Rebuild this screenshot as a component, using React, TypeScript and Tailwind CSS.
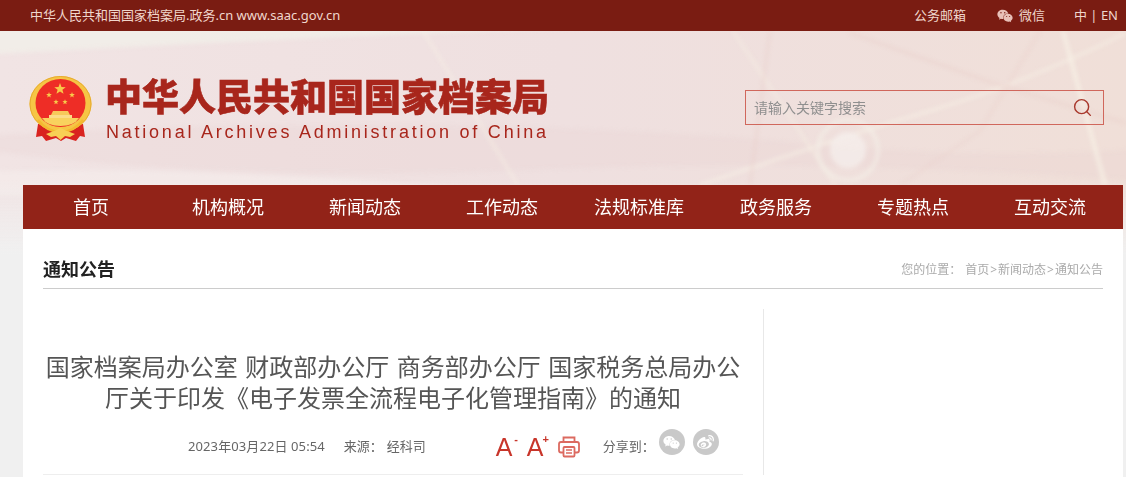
import { Search } from 'lucide-react'
import { FaWeibo, FaWeixin } from 'react-icons/fa'

const navItems = ['首页', '机构概况', '新闻动态', '工作动态', '法规标准库', '政务服务', '专题热点', '互动交流']

function star(cx: number, cy: number, r: number) {
    const pts: string[] = []
    for (let i = 0; i < 10; i++) {
        const rad = i % 2 === 0 ? r : r * 0.42
        const a = (Math.PI / 5) * i - Math.PI / 2
        pts.push(`${(cx + rad * Math.cos(a)).toFixed(2)},${(cy + rad * Math.sin(a)).toFixed(2)}`)
    }
    return pts.join(' ')
}

function Emblem() {
    return (
        <svg width="64" height="66" viewBox="0 0 64 66" className="shrink-0">
            <path d="M9 48 L7 61 L13 60 L17 65 L27 62 L32 65 L37 62 L47 65 L51 60 L56 61 L54 48 Z" fill="#d9231f" />
            <ellipse cx="31.5" cy="28" rx="31" ry="28" fill="#f6c545" />
            <ellipse cx="31.5" cy="28" rx="30.5" ry="27.5" fill="none" stroke="#e6ab30" strokeWidth="1" />
            <ellipse cx="31.5" cy="27" rx="25" ry="24" fill="#ee2d26" />
            <polygon points={star(31, 13, 6)} fill="#f8c94a" />
            <polygon points={star(20, 19, 3)} fill="#f8c94a" />
            <polygon points={star(43, 19, 3)} fill="#f8c94a" />
            <polygon points={star(27, 26, 2.8)} fill="#f8c94a" />
            <polygon points={star(36, 26, 2.8)} fill="#f8c94a" />
            <path d="M24 35 H39 L41 39 H22 Z" fill="#f7c95a" />
            <rect x="20" y="39" width="23" height="3" fill="#fbdc87" />
            <path d="M13 42 H50 Q45 50 31.5 50 Q18 50 13 42 Z" fill="#f9d25e" />
            <path d="M9 44 Q18 56 31.5 56 Q45 56 54 44" fill="none" stroke="#f4b92f" strokeWidth="2.5" />
            <path d="M17 58 L25 55 L31.5 52 L38 55 L46 58 L41 61 L36 60 L31.5 64 L27 60 L22 61 Z" fill="#f8cf55" />
        </svg>
    )
}

function HeroBackdrop() {
    return (
        <svg className="absolute inset-0 h-full w-full" viewBox="0 0 1126 446" preserveAspectRatio="none" aria-hidden="true">
            <defs>
                <linearGradient id="wash" x1="0" y1="0" x2="1" y2="0">
                    <stop offset="0" stopColor="#f1e4e4" />
                    <stop offset="0.5" stopColor="#efe0e0" />
                    <stop offset="1" stopColor="#f0dfd8" />
                </linearGradient>
                <linearGradient id="fade" x1="0" y1="0" x2="0" y2="1">
                    <stop offset="0.33" stopColor="#f0f0f0" stopOpacity="0" />
                    <stop offset="0.5" stopColor="#f0f0f0" stopOpacity="1" />
                </linearGradient>
            </defs>
            <rect width="1126" height="446" fill="url(#wash)" />
            <g className="blur-[2px]">
                <path d="M-20 -10 H820 Q400 0 -20 24 Z" fill="#f1ede8" opacity="0.9" />
                <path d="M-20 105 Q400 80 780 110 Q960 130 1146 118 V150 Q800 125 500 140 Q200 150 -20 118 Z" fill="#e8cfcf" opacity="0.25" />
                <path d="M-20 140 Q250 135 560 165 H-20 Z" fill="#f6eeec" opacity="0.55" />
                <g stroke="#f7f1e6" fill="none">
                    <path d="M423 0 L518 154" strokeWidth="3" opacity="0.55" />
                    <path d="M733 0 L835 154" strokeWidth="3" opacity="0.5" />
                    <path d="M1063 0 L1105 154" strokeWidth="4" opacity="0.8" />
                    <path d="M1126 2 Q1030 50 933 79 Q860 100 700 154" strokeWidth="3" opacity="0.65" />
                </g>
                <g stroke="#e8c9c4" fill="none" opacity="0.5">
                    <path d="M850 2 L993 52 L1126 92" strokeWidth="2" />
                    <path d="M770 0 L750 154" strokeWidth="2" />
                    <path d="M1040 0 L980 100 L900 154" strokeWidth="1.5" />
                </g>
                <circle cx="848" cy="119" r="30" fill="none" stroke="#f5efe8" strokeWidth="4" opacity="0.65" />
                <circle cx="848" cy="119" r="18" fill="#f5efec" opacity="0.75" />
            </g>
            <rect width="1126" height="446" fill="url(#fade)" />
        </svg>
    )
}

function FontSizeButton({ mark }: { mark: string }) {
    return (
        <span className="relative block w-[19px] font-['Liberation_Sans',sans-serif] text-[25px] leading-[25px] text-[#c8352a]">
            A
            <span className="absolute top-[-1px] right-[-3px] text-[11px] leading-[11px] font-bold">{mark}</span>
        </span>
    )
}

function PrintIcon() {
    return (
        <svg width="22" height="22" viewBox="0 0 22 22" fill="none" stroke="#dc6a60" strokeWidth="1.8">
            <path d="M5.5 6 V1.5 H16.5 V6" />
            <path d="M5.5 16.5 H3 Q1 16.5 1 14.5 V8 Q1 6 3 6 H19 Q21 6 21 8 V14.5 Q21 16.5 19 16.5 H16.5" />
            <rect x="5.5" y="11" width="11" height="9.5" rx="1" />
            <path d="M8 14 H14 M8 17 H14" strokeWidth="1.4" />
        </svg>
    )
}

export default function App() {
    return (
        <div className="h-[477px] overflow-hidden bg-[#f0f0f0] font-['Noto_Sans','Noto_Sans_CJK_SC',sans-serif]">
            <div className="flex h-[31px] items-center justify-between bg-[#7a1c12] pr-[8px] pl-[30px] text-[13px] text-[#f0d6cc]">
                <span>中华人民共和国国家档案局.政务.cn www.saac.gov.cn</span>
                <div className="flex items-center">
                    <span>公务邮箱</span>
                    <FaWeixin className="mr-[6px] ml-[31px] h-[16px] w-[16px] text-[#e8c0b8]" />
                    <span>微信</span>
                    <span className="ml-[29px]">中 | EN</span>
                </div>
            </div>

            <div className="relative">
                <HeroBackdrop />
                <div className="relative">
                    <header className="flex h-[154px] items-center justify-between pr-[22px] pl-[29px]">
                        <div className="flex items-center gap-[13px] pt-[2px]">
                            <Emblem />
                            <div className="mb-[2px] w-[444px]">
                                <div className="-ml-[1px] text-[37px] leading-[46px] font-black whitespace-nowrap text-[#a8261c] [-webkit-text-stroke:0.6px_#a8261c]">
                                    中华人民共和国国家档案局
                                </div>
                                <div className="mt-[2px] font-['Liberation_Sans',sans-serif] text-[18px] leading-[20px] tracking-[2.77px] whitespace-nowrap text-[#a8261c]">
                                    National Archives Administration of China
                                </div>
                            </div>
                        </div>
                        <div className="mb-[2px] flex h-[35px] w-[359px] items-center justify-between border border-[#d0675c] pr-[10px] pl-[8px] text-[14px] text-[#8f8f8f]">
                            <span>请输入关键字搜索</span>
                            <Search size={21} strokeWidth={1.6} className="text-[#a8382c]" />
                        </div>
                    </header>

                    <main className="mr-[3px] ml-[23px]">
                        <nav className="grid h-[44px] grid-cols-[repeat(8,137px)] items-center bg-[#922318] text-center text-[18px] text-white">
                            {navItems.map((item) => (
                                <span key={item} className="pr-[1px]">
                                    {item}
                                </span>
                            ))}
                        </nav>

                        <div className="h-[248px] bg-white px-[20px]">
                            <div className="flex h-[60px] items-end justify-between border-b border-[#cccccc] pb-[6px]">
                                <h2 className="text-[18px] leading-[26px] font-bold text-[#222222]">通知公告</h2>
                                <div className="pb-[2px] text-[12px] leading-[20px] text-[#aaaaaa]">
                                    您的位置：
                                    <span className="ml-[4px]">
                                        首页<span className="mx-[1px]">&gt;</span>新闻动态<span className="mx-[1px]">&gt;</span>通知公告
                                    </span>
                                </div>
                            </div>

                            <div className="mt-[20px] flex">
                                <article className="w-[700px]">
                                    <h1 className="pt-[42px] text-center text-[24px] leading-[31px] text-[#555555] [word-spacing:1.3px]">
                                        国家档案局办公室 财政部办公厅 商务部办公厅 国家税务总局办公厅关于印发《电子发票全流程电子化管理指南》的通知
                                    </h1>
                                    <div className="mt-[19px] flex h-[30px] items-center pl-[145px] text-[13px] text-[#666666]">
                                        <span className="tracking-[0.1px]">2023年03月22日 05:54</span>
                                        <span className="ml-[19px]">来源：</span>
                                        <span className="ml-[4px]">经科司</span>
                                        <div className="ml-[70px] flex items-center gap-[12px]">
                                            <FontSizeButton mark="-" />
                                            <FontSizeButton mark="+" />
                                            <PrintIcon />
                                        </div>
                                        <span className="ml-[23px]">分享到：</span>
                                        <div className="mb-[10px] ml-[4px] flex gap-[8px]">
                                            <span className="flex h-[26px] w-[26px] items-center justify-center rounded-full bg-[#c9c9c9] text-white">
                                                <FaWeixin size={17} />
                                            </span>
                                            <span className="flex h-[26px] w-[26px] items-center justify-center rounded-full bg-[#c9c9c9] text-white">
                                                <FaWeibo size={17} />
                                            </span>
                                        </div>
                                    </div>
                                    <div className="mt-[12px] border-b border-[#eeeeee]" />
                                </article>
                                <aside className="ml-[20px] flex-1 border-l border-[#e8e8e8]" />
                            </div>
                        </div>
                    </main>
                </div>
            </div>
        </div>
    )
}
